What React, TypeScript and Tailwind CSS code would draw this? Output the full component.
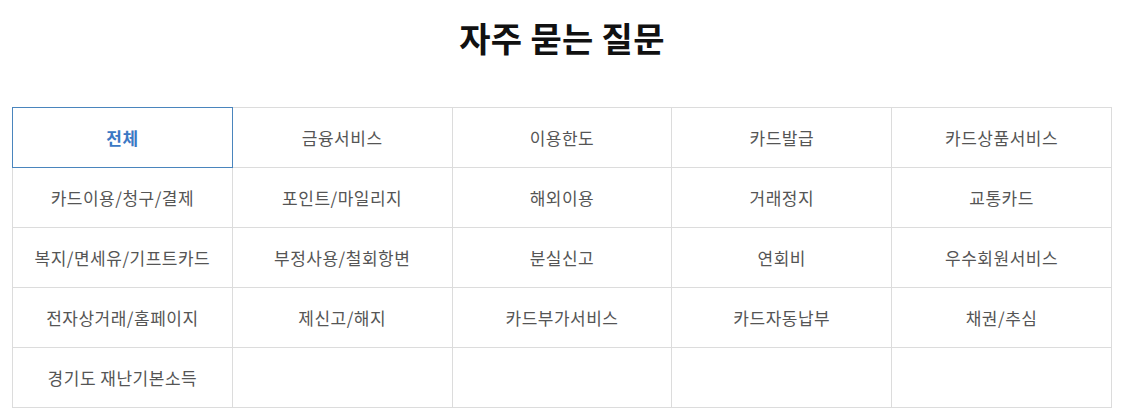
const categories = [
  "전체",
  "금융서비스",
  "이용한도",
  "카드발급",
  "카드상품서비스",
  "카드이용/청구/결제",
  "포인트/마일리지",
  "해외이용",
  "거래정지",
  "교통카드",
  "복지/면세유/기프트카드",
  "부정사용/철회항변",
  "분실신고",
  "연회비",
  "우수회원서비스",
  "전자상거래/홈페이지",
  "제신고/해지",
  "카드부가서비스",
  "카드자동납부",
  "채권/추심",
  "경기도 재난기본소득",
  "",
  "",
  "",
  "",
];

export default function App() {
  return (
    <div
      className="min-h-screen bg-white"
      style={{ fontFamily: '"Noto Sans CJK KR", "Noto Sans", sans-serif' }}
    >
      <div className="ml-[12px] w-[1100px]">
        <h1 className="pt-[13px] text-center text-[34px] font-bold leading-[50px] tracking-[0.3px] text-[#111]">
          자주 묻는 질문
        </h1>
        <div className="mt-[44px] grid grid-cols-5 gap-px bg-[#dcdcdc] p-px">
          {categories.map((label, i) => (
            <div
              key={i}
              className={
                i === 0
                  ? "relative z-10 flex h-[59px] items-center justify-center bg-white text-[17px] font-semibold tracking-[0.5px] text-[#3b78c4] ring-1 ring-[#4a85bd]"
                  : "flex h-[59px] items-center justify-center bg-white text-[17px] tracking-[0.5px] text-[#555]"
              }
            >
              {label}
            </div>
          ))}
        </div>
      </div>
    </div>
  );
}
